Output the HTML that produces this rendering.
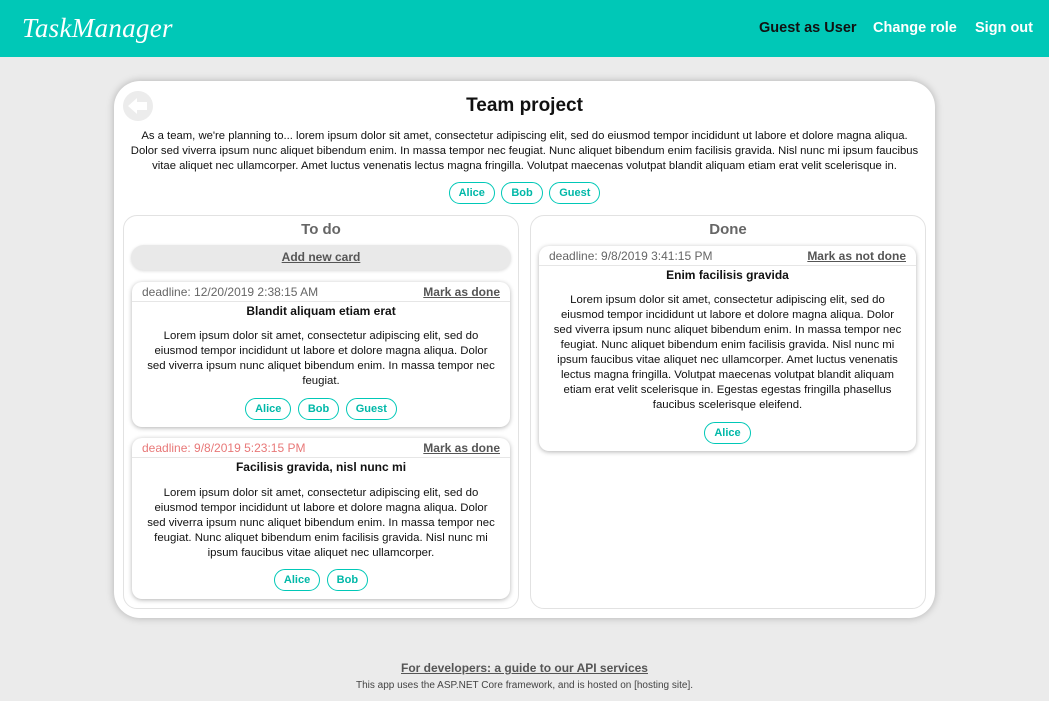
<!DOCTYPE html>
<html><head><meta charset="utf-8"><style>
*{box-sizing:border-box;margin:0;padding:0}
body{width:1049px;height:701px;background:#ebebeb;font-family:"Liberation Sans",sans-serif;position:relative;overflow:hidden;color:#111}
.hdr{position:absolute;left:0;top:0;width:1049px;height:57px;background:#00c8b7}
.logo{position:absolute;left:22px;top:13px;color:#fff;font-family:"Liberation Serif",serif;font-style:italic;font-size:27px;letter-spacing:0.3px}
.nav{position:absolute;top:20px;font-size:14.5px;font-weight:bold;color:#fff}
.panel{position:absolute;left:114px;top:81px;width:821px;height:537px;background:#fff;border-radius:26px;box-shadow:0 0 8px rgba(0,0,0,.25)}
.abs{position:absolute}
.c{text-align:center}
.col{position:absolute;border:1px solid #e2e2e2;border-radius:14px;background:#fff}
.card{position:absolute;background:#fff;border-radius:10px;box-shadow:0 1px 5px rgba(0,0,0,.3)}
.dl{position:absolute;left:10px;top:3px;font-size:12px;color:#666}
.mk{position:absolute;right:10px;top:3px;font-size:12px;font-weight:bold;color:#555;text-decoration:underline}
.sep{position:absolute;left:0;right:0;top:19px;border-top:1px solid #e6e6e6}
.tt{position:absolute;left:0;right:0;top:22px;text-align:center;font-size:12px;font-weight:bold}
.tx{position:absolute;left:0;right:0;text-align:center;font-size:11.4px;line-height:15px;color:#111;white-space:nowrap}
.pill{display:inline-block;border:1.5px solid #00c8b7;color:#00b8a8;font-weight:bold;font-size:11px;border-radius:12px;height:22px;line-height:20px;padding:0 9px;margin:0 1px;background:#fff;vertical-align:top}
.pills{position:absolute;left:0;right:0;text-align:center}
</style></head><body>
<div class="hdr">
<div class="logo">TaskManager</div>
<div class="nav" style="left:759px;color:#111">Guest as User</div>
<div class="nav" style="left:873px">Change role</div>
<div class="nav" style="left:975px">Sign out</div>
</div>
<div class="panel">
 <svg class="abs" style="left:8px;top:9px" width="32" height="32" viewBox="0 0 32 32"><circle cx="16" cy="16" r="15" fill="#ececec"/><path d="M6 16 L15 8 L15 12 L25 12 L25 20 L15 20 L15 24 Z" fill="#fff"/></svg>
 <div class="abs c" style="left:0;right:0;top:14px;font-size:19px;font-weight:bold">Team project</div>
 <div class="tx" style="top:48px;font-size:11.3px">As a team, we're planning to... lorem ipsum dolor sit amet, consectetur adipiscing elit, sed do eiusmod tempor incididunt ut labore et dolore magna aliqua.<br>Dolor sed viverra ipsum nunc aliquet bibendum enim. In massa tempor nec feugiat. Nunc aliquet bibendum enim facilisis gravida. Nisl nunc mi ipsum faucibus<br>vitae aliquet nec ullamcorper. Amet luctus venenatis lectus magna fringilla. Volutpat maecenas volutpat blandit aliquam etiam erat velit scelerisque in.</div>
 <div class="pills" style="top:101px"><span class="pill">Alice</span> <span class="pill">Bob</span> <span class="pill">Guest</span></div>
</div>
<div class="col" style="left:123px;top:215px;width:396px;height:394px">
 <div class="abs c" style="left:0;right:0;top:5px;font-size:15px;font-weight:bold;color:#666">To do</div>
</div>
<div class="abs c" style="left:131px;top:245px;width:380px;height:25px;background:#e9e9e9;border-radius:13px;box-shadow:0 1px 3px rgba(0,0,0,.15);font-size:12px;font-weight:bold;color:#555;text-decoration:underline;line-height:25px">Add new card</div>
<div class="card" style="left:132px;top:282px;width:378px;height:145px">
 <div class="dl">deadline: 12/20/2019 2:38:15 AM</div><div class="mk">Mark as done</div><div class="sep"></div>
 <div class="tt">Blandit aliquam etiam erat</div>
 <div class="tx" style="top:47px">Lorem ipsum dolor sit amet, consectetur adipiscing elit, sed do<br>eiusmod tempor incididunt ut labore et dolore magna aliqua. Dolor<br>sed viverra ipsum nunc aliquet bibendum enim. In massa tempor nec<br>feugiat.</div>
 <div class="pills" style="top:116px"><span class="pill">Alice</span> <span class="pill">Bob</span> <span class="pill">Guest</span></div>
</div>
<div class="card" style="left:132px;top:438px;width:378px;height:161px">
 <div class="dl" style="color:#e87878">deadline: 9/8/2019 5:23:15 PM</div><div class="mk">Mark as done</div><div class="sep"></div>
 <div class="tt">Facilisis gravida, nisl nunc mi</div>
 <div class="tx" style="top:48px">Lorem ipsum dolor sit amet, consectetur adipiscing elit, sed do<br>eiusmod tempor incididunt ut labore et dolore magna aliqua. Dolor<br>sed viverra ipsum nunc aliquet bibendum enim. In massa tempor nec<br>feugiat. Nunc aliquet bibendum enim facilisis gravida. Nisl nunc mi<br>ipsum faucibus vitae aliquet nec ullamcorper.</div>
 <div class="pills" style="top:131px"><span class="pill">Alice</span> <span class="pill">Bob</span></div>
</div>
<div class="col" style="left:530px;top:215px;width:396px;height:394px">
 <div class="abs c" style="left:0;right:0;top:5px;font-size:15px;font-weight:bold;color:#666">Done</div>
</div>
<div class="card" style="left:539px;top:246px;width:377px;height:205px">
 <div class="dl">deadline: 9/8/2019 3:41:15 PM</div><div class="mk">Mark as not done</div><div class="sep"></div>
 <div class="tt">Enim facilisis gravida</div>
 <div class="tx" style="top:47px">Lorem ipsum dolor sit amet, consectetur adipiscing elit, sed do<br>eiusmod tempor incididunt ut labore et dolore magna aliqua. Dolor<br>sed viverra ipsum nunc aliquet bibendum enim. In massa tempor nec<br>feugiat. Nunc aliquet bibendum enim facilisis gravida. Nisl nunc mi<br>ipsum faucibus vitae aliquet nec ullamcorper. Amet luctus venenatis<br>lectus magna fringilla. Volutpat maecenas volutpat blandit aliquam<br>etiam erat velit scelerisque in. Egestas egestas fringilla phasellus<br>faucibus scelerisque eleifend.</div>
 <div class="pills" style="top:176px"><span class="pill">Alice</span></div>
</div>
<div class="abs c" style="left:0;right:0;top:661px;font-size:12px;font-weight:bold;color:#555;text-decoration:underline">For developers: a guide to our API services</div>
<div class="abs c" style="left:0;right:0;top:680px;font-size:10px;color:#444">This app uses the ASP.NET Core framework, and is hosted on [hosting site].</div>
</body></html>
